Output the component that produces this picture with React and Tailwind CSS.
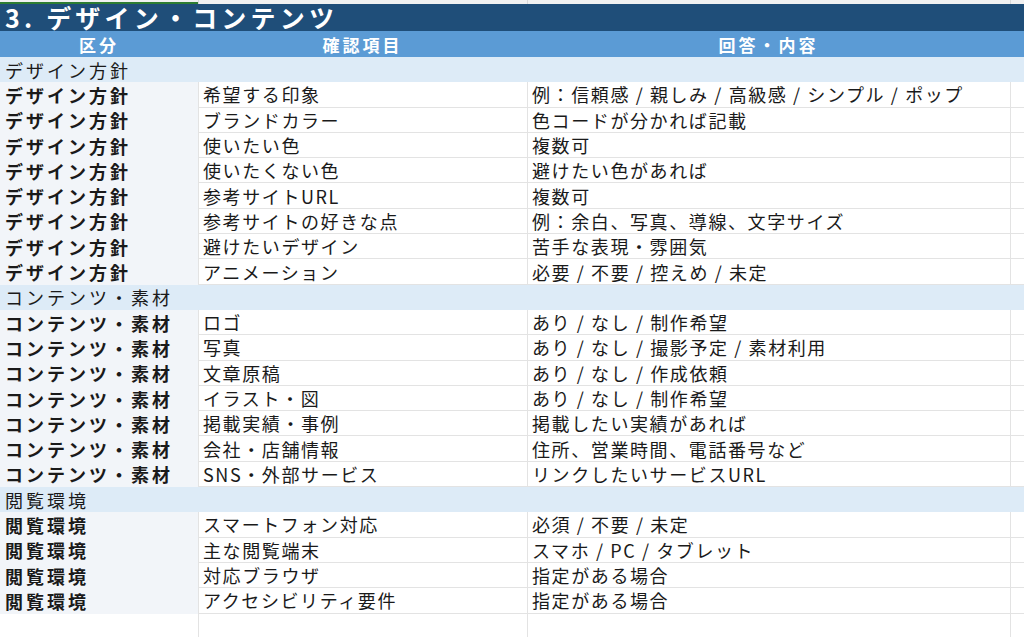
const sections = [
  {
    name: "デザイン方針",
    rows: [
      ["希望する印象", "例：信頼感 / 親しみ / 高級感 / シンプル / ポップ"],
      ["ブランドカラー", "色コードが分かれば記載"],
      ["使いたい色", "複数可"],
      ["使いたくない色", "避けたい色があれば"],
      ["参考サイトURL", "複数可"],
      ["参考サイトの好きな点", "例：余白、写真、導線、文字サイズ"],
      ["避けたいデザイン", "苦手な表現・雰囲気"],
      ["アニメーション", "必要 / 不要 / 控えめ / 未定"],
    ],
  },
  {
    name: "コンテンツ・素材",
    rows: [
      ["ロゴ", "あり / なし / 制作希望"],
      ["写真", "あり / なし / 撮影予定 / 素材利用"],
      ["文章原稿", "あり / なし / 作成依頼"],
      ["イラスト・図", "あり / なし / 制作希望"],
      ["掲載実績・事例", "掲載したい実績があれば"],
      ["会社・店舗情報", "住所、営業時間、電話番号など"],
      ["SNS・外部サービス", "リンクしたいサービスURL"],
    ],
  },
  {
    name: "閲覧環境",
    rows: [
      ["スマートフォン対応", "必須 / 不要 / 未定"],
      ["主な閲覧端末", "スマホ / PC / タブレット"],
      ["対応ブラウザ", "指定がある場合"],
      ["アクセシビリティ要件", "指定がある場合"],
    ],
  },
];

const cols = "grid grid-cols-[198px_329px_483px_1fr]";

function DataRow({ group, item, answer }) {
  return (
    <div className={`${cols} h-[25.3px] shrink-0`}>
      <div className="flex items-center bg-[#f2f5f9] pl-[5px] font-bold tracking-[3px]">{group}</div>
      <div className="flex items-center border-b border-l border-[#e3e3e3] bg-white pl-[4px]">{item}</div>
      <div className="flex items-center border-b border-l border-[#e3e3e3] bg-white pl-[4px]">{answer}</div>
      <div className="border-b border-l border-[#e3e3e3] bg-white" />
    </div>
  );
}

export default function App() {
  return (
    <div
      className="flex h-[637px] w-[1024px] flex-col overflow-hidden bg-white text-[18px] leading-none tracking-[1.6px] text-[#1a1a1a]"
      style={{ fontFamily: '"Noto Sans CJK JP", "Noto Sans", sans-serif' }}
    >
      <div className={`${cols} h-[4px] shrink-0 bg-[#f1f1f1]`}>
        <div className="border-b-2 border-[#2e7d32]" />
        <div className="border-l border-[#d9d9d9]" />
        <div className="border-l border-[#d9d9d9]" />
        <div className="border-l border-[#d9d9d9]" />
      </div>
      <div className="flex h-[27px] shrink-0 items-center bg-[#1f4e79] pl-[5px] text-[25px] font-bold tracking-[4.2px] text-white">
        3. デザイン・コンテンツ
      </div>
      <div className={`${cols} h-[26px] shrink-0 bg-[#5b9bd5] text-[17px] font-bold tracking-[3px] text-white`}>
        <div className="flex items-center justify-center">区分</div>
        <div className="flex items-center justify-center">確認項目</div>
        <div className="flex items-center justify-center">回答・内容</div>
        <div />
      </div>
      {sections.map((s) => (
        <div key={s.name} className="flex flex-col">
          <div className="flex h-[25.3px] shrink-0 items-center bg-[#ddebf7] pl-[5px] tracking-[3px]">{s.name}</div>
          {s.rows.map(([item, answer]) => (
            <DataRow key={item} group={s.name} item={item} answer={answer} />
          ))}
        </div>
      ))}
      <div className={`${cols} h-[26px] shrink-0`}>
        <div />
        <div className="border-l border-[#e3e3e3]" />
        <div className="border-l border-[#e3e3e3]" />
        <div className="border-l border-[#e3e3e3]" />
      </div>
    </div>
  );
}
